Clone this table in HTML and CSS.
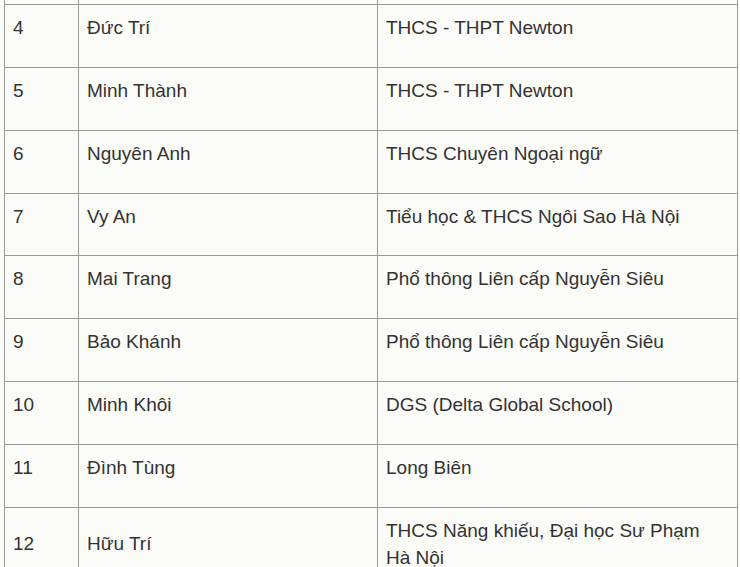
FILE: index.html
```html
<!DOCTYPE html>
<html lang="vi">
<head>
<meta charset="utf-8">
<link rel="stylesheet" href="styles.css">
</head>
<body>
<table class="list">
  <colgroup>
    <col class="c-no">
    <col class="c-name">
    <col class="c-school">
  </colgroup>
  <tbody>
    <tr class="cut"><td></td><td></td><td></td></tr>
    <tr><td><p>4</p></td><td><p>Đức Trí</p></td><td><p>THCS - THPT Newton</p></td></tr>
    <tr><td><p>5</p></td><td><p>Minh Thành</p></td><td><p>THCS - THPT Newton</p></td></tr>
    <tr><td><p>6</p></td><td><p>Nguyên Anh</p></td><td><p>THCS Chuyên Ngoại ngữ</p></td></tr>
    <tr><td><p>7</p></td><td><p>Vy An</p></td><td><p>Tiểu học &amp; THCS Ngôi Sao Hà Nội</p></td></tr>
    <tr><td><p>8</p></td><td><p>Mai Trang</p></td><td><p>Phổ thông Liên cấp Nguyễn Siêu</p></td></tr>
    <tr><td><p>9</p></td><td><p>Bảo Khánh</p></td><td><p>Phổ thông Liên cấp Nguyễn Siêu</p></td></tr>
    <tr><td><p>10</p></td><td><p>Minh Khôi</p></td><td><p>DGS (Delta Global School)</p></td></tr>
    <tr><td><p>11</p></td><td><p>Đình Tùng</p></td><td><p>Long Biên</p></td></tr>
    <tr><td><p>12</p></td><td><p>Hữu Trí</p></td><td><p>THCS Năng khiếu, Đại học Sư Phạm Hà Nội</p></td></tr>
  </tbody>
</table>
</body>
</html>
```

FILE: styles.css
```css
html, body {
  margin: 0;
  padding: 0;
  background: #fbfbf8;
}

body {
  overflow: hidden;
  font-family: "Liberation Sans", Arial, sans-serif;
  color: #333;
}

.list {
  margin-left: 4px;
  width: 733px;
  table-layout: fixed;
  border-collapse: collapse;
  font-size: 19px;
}

.c-no { width: 74px; }
.c-name { width: 299px; }
.c-school { width: 360px; }

.list td {
  border: 1px solid #9a9a9a;
  padding: 9px 8px 8px;
  vertical-align: middle;
}

.list p {
  margin: 0 0 17.85px;
  line-height: 27px;
}

.list .cut td {
  border-top: none;
  padding: 0;
  height: 4px;
}
```
